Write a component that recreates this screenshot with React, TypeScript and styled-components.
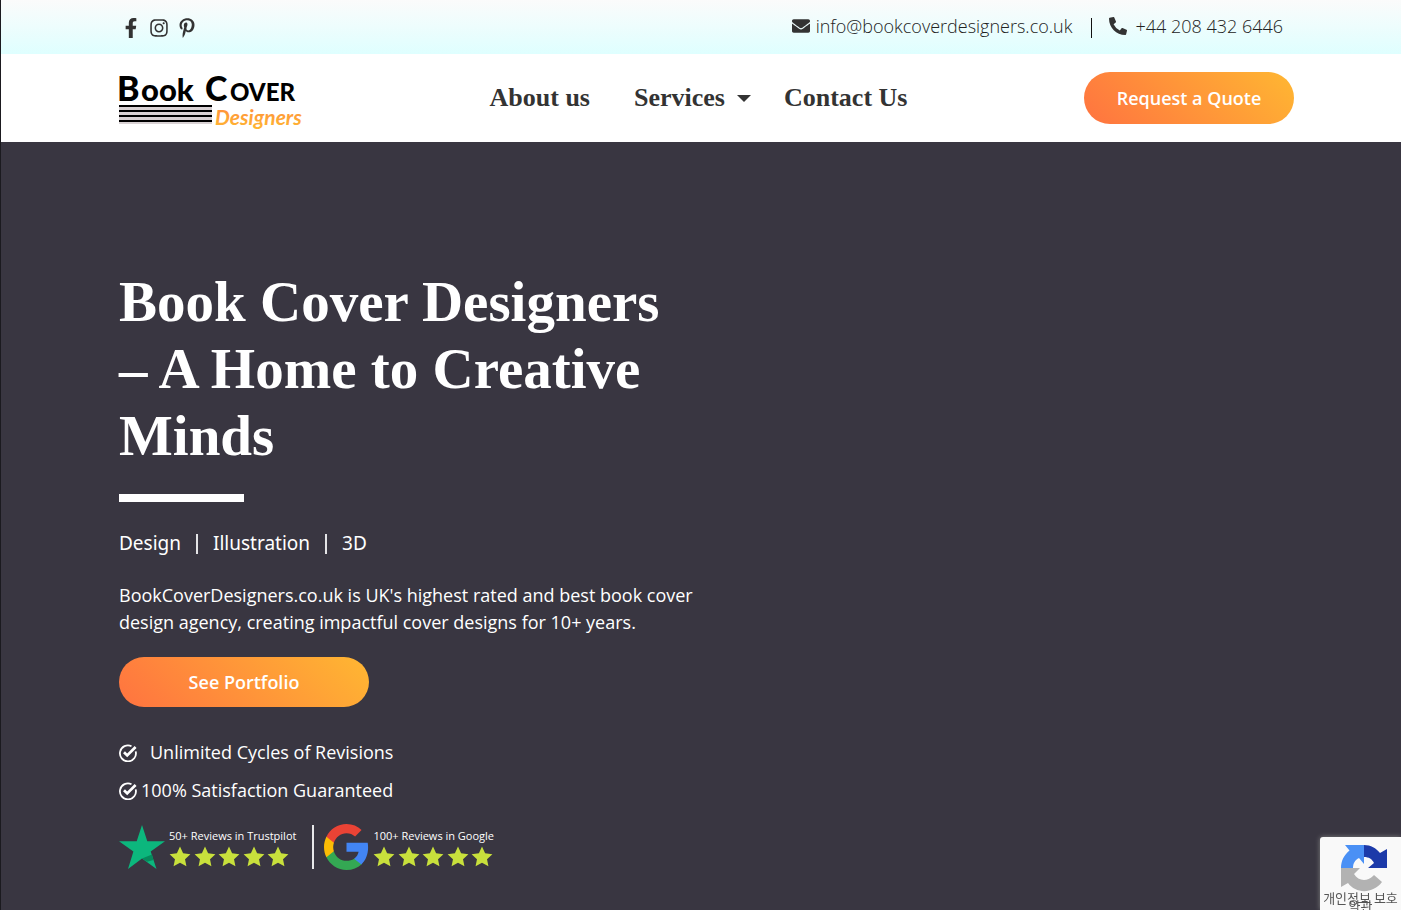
import React from "react";
import styled, { createGlobalStyle } from "styled-components";
import { FaFacebookF, FaInstagram, FaPinterestP, FaEnvelope, FaPhoneAlt } from "react-icons/fa";

const sans = `"Open Sans", "Noto Sans", sans-serif`;
const serif = `"Liberation Serif", serif`;
const ink = "#333333";

const GlobalStyle = createGlobalStyle`
  *, *::before, *::after { box-sizing: border-box; }
  body { margin: 0; background: #393641; font-family: ${sans}; color: ${ink}; }
  a { color: inherit; text-decoration: none; }
  h1, p, ul { margin: 0; padding: 0; }
  ul { list-style: none; }
  svg { display: block; flex: none; }
`;

const Page = styled.div`
  min-height: 100vh;
  display: flex;
  flex-direction: column;
  border-left: 1px solid #1b1a1f;
`;

const Container = styled.div`
  width: 100%;
  max-width: 1186px;
  margin: 0 auto;
  padding-left: 11px;
`;

const TopBar = styled.div`
  background: linear-gradient(#fbfbfb, #dfffff);
`;

const TopBarInner = styled(Container)`
  height: 54px;
  padding-right: 11px;
  display: flex;
  justify-content: space-between;
  align-items: center;
`;

const Social = styled.nav`
  display: flex;
  align-items: center;
  gap: 8px;
  padding: 1px 0 0 2px;
  font-size: 20px;
  a { width: 20px; display: flex; justify-content: center; }
`;

const Contact = styled.div`
  display: flex;
  align-items: center;
  font-size: 18px;
  line-height: 24px;
  font-weight: 300;
  color: #222;
  padding-bottom: 2px;
  svg { color: ${ink}; }
`;

const ContactLink = styled.a<{ $gap: number }>`
  display: flex;
  align-items: center;
  gap: ${(p) => p.$gap}px;
`;

const Divider = styled.span`
  width: 1px;
  height: 20px;
  margin: 4px 17px 0 19px;
  background: #111;
`;

const Header = styled.header`
  background: #fff;
`;

const HeaderInner = styled(Container)`
  height: 88px;
  display: grid;
  grid-template-columns: 1fr auto 1fr;
  align-items: center;
`;

const LogoLink = styled.a`
  padding-top: 14px;
  svg { overflow: visible; }
`;

const Menu = styled.nav`
  display: flex;
  align-items: center;
  gap: 44px;
  padding-right: 16px;
  font: bold 26px/32px ${serif};
`;

const MenuGroup = styled.div`
  display: flex;
  align-items: center;
  gap: 33px;
`;

const MenuLink = styled.a`
  display: flex;
  align-items: center;
  gap: 12px;
`;

const Caret = styled.span`
  border: 7px solid transparent;
  border-top-color: ${ink};
  border-bottom: 0;
`;

const Pill = styled.button<{ $width: number; $height: number; $size: number }>`
  display: block;
  width: ${(p) => p.$width}px;
  height: ${(p) => p.$height}px;
  padding: 0;
  border: 0;
  border-radius: 26px;
  background: linear-gradient(45deg, #ff7340, #ffb732);
  color: #fff;
  font: 600 ${(p) => p.$size}px/24px ${sans};
  cursor: pointer;
`;

const HeaderAction = styled.div`
  justify-self: end;
`;

const Hero = styled.main`
  flex: 1;
  background: #393641;
  color: #fff;
  padding: 126px 0 36px;
`;

const HeroText = styled.div`
  max-width: 580px;
`;

const Title = styled.h1`
  font: bold 57px/67px ${serif};
`;

const Rule = styled.div`
  width: 125px;
  height: 8px;
  margin: 25px 0 27px;
  background: #fff;
`;

const Tags = styled.ul`
  display: flex;
  align-items: center;
  font: 19px/28px "Noto Sans", sans-serif;
  li + li::before {
    content: "";
    display: inline-block;
    width: 2px;
    height: 20px;
    margin: 0 15px;
    background: #e4e4e6;
    vertical-align: -4px;
  }
`;

const Lead = styled.p`
  margin: 25px 0 21px;
  font-size: 18px;
  line-height: 27px;
`;

const Perks = styled.ul`
  margin-top: 32px;
  display: grid;
  gap: 11px;
  font-size: 18px;
  line-height: 27px;
`;

const Perk = styled.li<{ $gap: number }>`
  display: flex;
  align-items: center;
  gap: ${(p) => p.$gap}px;
`;

const Reviews = styled.div`
  margin-top: 20px;
  display: flex;
  align-items: center;
`;

const Review = styled.div`
  display: flex;
  align-items: center;
  gap: 4px;
`;

const ReviewLabel = styled.p`
  font: 11px/16px ${sans};
  white-space: nowrap;
`;

const Stars = styled.div`
  display: flex;
  justify-content: space-between;
  width: 120px;
  margin-top: 2px;
`;

const ReviewLine = styled.span`
  width: 2px;
  height: 44px;
  margin: 0 10px 0 16px;
  background: #e8e8ea;
`;

const Badge = styled.aside`
  position: fixed;
  right: 0;
  bottom: 0;
  width: 81px;
  height: 73px;
  padding-top: 7px;
  overflow: hidden;
  border-radius: 3px 0 0 0;
  background: #f9f9f9;
  box-shadow: 0 0 5px #808080;
  display: flex;
  flex-direction: column;
  align-items: center;
  color: #555;
  font: 13px/8px "Noto Sans CJK KR", sans-serif;
  white-space: nowrap;
  svg { margin: 0 0 1px 6px; }
`;

const Logo = () => (
  <svg width="182" height="58" viewBox="0 0 182 58" role="img" aria-label="Book Cover Designers">
    <defs>
      <linearGradient id="script" x1="0" y1="0" x2="0" y2="1">
        <stop offset="0" stopColor="#ff8a3c" />
        <stop offset="1" stopColor="#ffb732" />
      </linearGradient>
    </defs>
    <g fontFamily="Lato, sans-serif" fontWeight="900" fill="#000">
      <text x="-2" y="25" fontSize="34">B</text>
      <text x="22" y="25" fontSize="31">ook</text>
      <text x="86" y="25" fontSize="34">C</text>
      <text x="111" y="25" fontSize="24">OVER</text>
    </g>
    <path d="M0 29h93v19H0z" fill="#d9d2d4" />
    <path d="M0 30h93M0 35h93M0 40h93M0 45h93" stroke="#000" strokeWidth="2" />
    <text x="96" y="49" fontFamily="Lato, sans-serif" fontStyle="italic" fontSize="21" fontWeight="700" fill="url(#script)">
      Designers
    </text>
  </svg>
);

const Check = () => (
  <svg width="18" height="18" viewBox="0 0 18 18" fill="none" stroke="#fff">
    <path d="M12.5 2.2A8 8 0 1 0 16.7 7.4" strokeWidth="1.8" />
    <path d="M5 8.2l3.2 3.2L16.6 3" strokeWidth="2.7" />
  </svg>
);

const starPath =
  "M12 .6l3.400 7.300 8 1-5.900 5.500 1.550 7.900L12 18.400l-7.050 3.900L6.500 14.400.6 8.900l8-1z";

const StarRow = () => (
  <Stars role="img" aria-label="5 out of 5 stars">
    {[1, 2, 3, 4, 5].map((n) => (
      <svg key={n} width="22" height="21" viewBox="0 0 24 23" fill="#c8e03c">
        <path d={starPath} />
      </svg>
    ))}
  </Stars>
);

const TrustStar = () => (
  <svg width="46" height="46" viewBox="0 0 46 46">
    <path d="M23 1l5.3 16.3H46L31.700 27.500 37.500 45 23 34.400 9 45l5.400-17.500L0 17.300h17.700z" fill="#0cb77d" />
    <path d="M23 34.400l10-4 1.500 5.600-6.500 1.700z" fill="#058a5c" />
  </svg>
);

const GoogleG = () => (
  <svg width="45" height="46" viewBox="1 1 22 22" preserveAspectRatio="none">
    <path fill="#4285f4" d="M22.56 12.25c0-.78-.07-1.53-.2-2.25H12v4.26h5.92c-.26 1.37-1.04 2.53-2.21 3.31v2.77h3.57c2.08-1.92 3.28-4.74 3.28-8.09z" />
    <path fill="#34a853" d="M12 23c2.97 0 5.46-.98 7.28-2.66l-3.57-2.77c-.98.66-2.23 1.06-3.71 1.06-2.86 0-5.29-1.93-6.16-4.53H2.18v2.84C3.99 20.53 7.7 23 12 23z" />
    <path fill="#fbbc05" d="M5.84 14.09c-.22-.66-.35-1.36-.35-2.09s.13-1.43.35-2.09V7.07H2.18C1.43 8.55 1 10.22 1 12s.43 3.45 1.18 4.93l3.66-2.84z" />
    <path fill="#ea4335" d="M12 5.38c1.62 0 3.06.56 4.21 1.64l3.15-3.15C17.45 2.09 14.97 1 12 1 7.7 1 3.99 3.47 2.18 7.07l3.66 2.84c.87-2.6 3.3-4.53 6.16-4.53z" />
  </svg>
);

const Recaptcha = () => (
  <svg width="48" height="49" viewBox="0 0 48 49">
    <path d="M24 1v19l-5-6c-4 2-6 5-6 10H1C1 17 4 11 9.500 6.500L5 1z" fill="#4a90f5" />
    <path d="M24 1c7 0 12 3 16 8l7-4v19H28l6-5c-2-4-5-6-10-6z" fill="#1c3aa9" />
    <path d="M1 24h19l-6 6c4 7 13 8 19 2l1-1 8 7c-9 12-26 12-34 1l-7 4z" fill="#b2b2b2" />
  </svg>
);

export default function App() {
  return (
    <Page>
      <GlobalStyle />
      <TopBar>
        <TopBarInner>
          <Social aria-label="Social media">
            <a href="#facebook" aria-label="Facebook"><FaFacebookF /></a>
            <a href="#instagram" aria-label="Instagram"><FaInstagram /></a>
            <a href="#pinterest" aria-label="Pinterest"><FaPinterestP /></a>
          </Social>
          <Contact>
            <ContactLink $gap={6} href="mailto:info@bookcoverdesigners.co.uk">
              <FaEnvelope />
              info@bookcoverdesigners.co.uk
            </ContactLink>
            <Divider />
            <ContactLink $gap={8} href="tel:+442084326446">
              <FaPhoneAlt />
              +44 208 432 6446
            </ContactLink>
          </Contact>
        </TopBarInner>
      </TopBar>
      <Header>
        <HeaderInner>
          <LogoLink href="#home"><Logo /></LogoLink>
          <Menu aria-label="Main">
            <MenuLink href="#about">About us</MenuLink>
            <MenuGroup>
              <MenuLink href="#services">Services<Caret /></MenuLink>
              <MenuLink href="#contact">Contact Us</MenuLink>
            </MenuGroup>
          </Menu>
          <HeaderAction>
            <Pill type="button" $width={210} $height={52} $size={18}>Request a Quote</Pill>
          </HeaderAction>
        </HeaderInner>
      </Header>
      <Hero>
        <Container>
          <HeroText>
            <Title>Book Cover Designers – A Home to Creative Minds</Title>
            <Rule />
            <Tags>
              <li>Design</li>
              <li>Illustration</li>
              <li>3D</li>
            </Tags>
            <Lead>
              BookCoverDesigners.co.uk is UK's highest rated and best book cover design agency,
              creating impactful cover designs for 10+ years.
            </Lead>
            <Pill type="button" $width={250} $height={50} $size={18}>See Portfolio</Pill>
            <Perks>
              <Perk $gap={13}><Check />Unlimited Cycles of Revisions</Perk>
              <Perk $gap={4}><Check />100% Satisfaction Guaranteed</Perk>
            </Perks>
            <Reviews>
              <Review>
                <TrustStar />
                <div>
                  <ReviewLabel>50+ Reviews in Trustpilot</ReviewLabel>
                  <StarRow />
                </div>
              </Review>
              <ReviewLine />
              <Review>
                <GoogleG />
                <div>
                  <ReviewLabel>100+ Reviews in Google</ReviewLabel>
                  <StarRow />
                </div>
              </Review>
            </Reviews>
          </HeroText>
        </Container>
      </Hero>
      <Badge>
        <Recaptcha />
        <span>개인정보 보호</span>
        <span>약관</span>
      </Badge>
    </Page>
  );
}
